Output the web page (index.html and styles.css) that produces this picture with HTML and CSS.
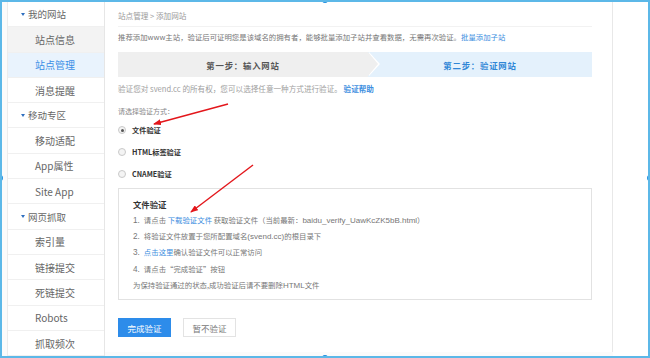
FILE: index.html
```html
<!DOCTYPE html>
<html lang="zh-CN">
<head>
    <meta charset="UTF-8">
    <title>添加网站</title>
    <link rel="stylesheet" href="styles.css">
</head>
<body>
    <div class="frame">
        <div class="sidebar">
            <div class="nav-head"><span class="caret"></span>我的网站</div>
            <div class="nav-item hover">站点信息</div>
            <div class="nav-item active">站点管理</div>
            <div class="nav-item">消息提醒</div>
            <div class="nav-head"><span class="caret"></span>移动专区</div>
            <div class="nav-item">移动适配</div>
            <div class="nav-item">App属性</div>
            <div class="nav-item">Site App</div>
            <div class="nav-head"><span class="caret"></span>网页抓取</div>
            <div class="nav-item">索引量</div>
            <div class="nav-item">链接提交</div>
            <div class="nav-item">死链提交</div>
            <div class="nav-item">Robots</div>
            <div class="nav-item">抓取频次</div>
        </div>

        <div class="main">
            <div class="crumb">站点管理 &gt; 添加网站</div>
            <p class="intro">推荐添加www主站，验证后可证明您是该域名的拥有者，能够批量添加子站并查看数据，无需再次验证。<a class="link">批量添加子站</a></p>

            <div class="steps">
                <div class="step step-done">第一步：输入网站</div>
                <div class="step step-now">第二步：验证网站</div>
            </div>

            <p class="hint">验证您对 svend.cc 的所有权，您可以选择任意一种方式进行验证。 <a class="link strong">验证帮助</a></p>

            <p class="label">请选择验证方式：</p>
            <div class="radio-row"><span class="radio checked"></span>文件验证</div>
            <div class="radio-row"><span class="radio"></span>HTML标签验证</div>
            <div class="radio-row"><span class="radio"></span>CNAME验证</div>

            <div class="method-box">
                <h3>文件验证</h3>
                <ol class="steps-list">
                    <li><span class="num">1.</span>请点击 <a class="link">下载验证文件</a> 获取验证文件（当前最新：<span class="latin">baidu_verify_UawKcZK5bB.html</span>）</li>
                    <li><span class="num">2.</span>将验证文件放置于您所配置域名<span class="latin">(svend.cc)</span>的根目录下</li>
                    <li><span class="num">3.</span><a class="link">点击这里</a>确认验证文件可以正常访问</li>
                    <li><span class="num">4.</span>请点击“完成验证”按钮</li>
                </ol>
                <p class="note">为保持验证通过的状态,成功验证后请不要删除<span class="latin">HTML</span>文件</p>
            </div>

            <div class="actions">
                <button class="btn btn-primary">完成验证</button>
                <button class="btn">暂不验证</button>
            </div>
        </div>

        <div class="rest"></div>

        <svg class="arrows" width="650" height="358" viewBox="0 0 650 358">
            <defs>
                <marker id="head" markerWidth="8" markerHeight="6" refX="7" refY="3" orient="auto" markerUnits="userSpaceOnUse">
                    <path d="M0 0 L8 3 L0 6 Z" fill="#e3161b"/>
                </marker>
            </defs>
            <line x1="228" y1="104" x2="154" y2="124" stroke="#e3161b" stroke-width="1.4" marker-end="url(#head)"/>
            <line x1="253" y1="165" x2="191" y2="212" stroke="#e3161b" stroke-width="1.4" marker-end="url(#head)"/>
        </svg>

        <span class="handle h-top"></span>
        <span class="handle h-bottom"></span>
        <span class="handle h-left"></span>
        <span class="handle h-right"></span>
    </div>
</body>
</html>
```

FILE: styles.css
```css
* {
    box-sizing: border-box;
}
body {
    margin: 0;
    background: #fff;
    font-family: "Noto Sans CJK SC", "Liberation Sans", sans-serif;
    color: #555;
}
.frame {
    position: relative;
    width: 650px;
    height: 358px;
    border: 2px solid #5cb8e8;
    display: flex;
    overflow: hidden;
    background: #fbfbfb;
}

/* sidebar */
.sidebar {
    width: 98px;
    margin-left: 5px;
    border-left: 1px solid #ececec;
    border-right: 1px solid #e6e6e6;
    background: #fff;
    flex-shrink: 0;
}
.nav-head, .nav-item {
    height: 25.3px;
    border-bottom: 1px solid #f0f0f0;
    display: flex;
    align-items: center;
    font-size: 9.5px;
    color: #666;
}
.nav-head {
    padding-left: 13px;
}
.caret {
    width: 0;
    height: 0;
    border-left: 2.5px solid transparent;
    border-right: 2.5px solid transparent;
    border-top: 3px solid #2f6fbf;
    margin-right: 3px;
}
.nav-item {
    padding-left: 27px;
    font-size: 10px;
}
.nav-item.hover {
    background: #f3f3f3;
}
.nav-item.active {
    background: #e9f3fd;
    color: #3a8ee6;
}

/* main panel */
.main {
    width: 508px;
    flex-shrink: 0;
    background: #fff;
    border-right: 1px solid #e8e8e8;
    padding: 0 20px 0 13px;
    height: 350px;
    font-size: 7.6px;
}
.rest {
    flex: 1;
    background: #fff;
}
.crumb {
    padding-top: 8px;
    padding-bottom: 4px;
    line-height: 12px;
    color: #9a9a9a;
    border-bottom: 1px solid #f2f2f2;
}
.intro {
    margin: 4px 0 0;
    line-height: 12px;
    color: #777;
    font-size: 7.4px;
}
.link {
    color: #3b8ee0;
}
.link.strong {
    font-weight: bold;
}
.steps {
    display: flex;
    height: 25px;
    margin-top: 9px;
}
.step {
    display: flex;
    align-items: center;
    justify-content: center;
    font-size: 8.4px;
    letter-spacing: 0.8px;
    font-weight: bold;
}
.step-done {
    width: 250px;
    background: #efefef;
    color: #555;
    position: relative;
}
.step-done::before,
.step-done::after {
    content: "";
    position: absolute;
    top: 0;
    width: 0;
    height: 0;
    border-top: 12.5px solid transparent;
    border-bottom: 12.5px solid transparent;
    z-index: 1;
}
.step-done::before {
    right: -12px;
    border-left: 11px solid #fff;
}
.step-done::after {
    right: -10px;
    border-left: 10px solid #efefef;
}
.step-now {
    flex: 1;
    background: #e4f1fc;
    color: #2f86d6;
}
.hint {
    margin: 6px 0 0;
    line-height: 12px;
    color: #a0a0a0;
}
.label {
    margin: 10px 0 0;
    line-height: 12px;
    color: #888;
    font-size: 7px;
}
.radio-row {
    height: 22px;
    display: flex;
    align-items: center;
    font-size: 7.2px;
    font-weight: bold;
    color: #333;
}
.label + .radio-row {
    margin-top: 2px;
}
.radio {
    width: 8px;
    height: 8px;
    border-radius: 50%;
    border: 1px solid #c9c9c9;
    background: #f4f4f4;
    margin: 0 6px 0 0;
    position: relative;
}
.radio.checked::after {
    content: "";
    position: absolute;
    left: 1.5px;
    top: 1.5px;
    width: 3px;
    height: 3px;
    border-radius: 50%;
    background: #555;
}
.method-box {
    margin-top: 3px;
    border: 1px solid #e2e2e2;
    padding: 8px 14px 12px;
    height: 112px;
}
.method-box h3 {
    margin: 0 0 1px;
    font-size: 8.4px;
    line-height: 14px;
    color: #333;
}
.steps-list {
    list-style: none;
    margin: 0;
    padding: 0;
}
.steps-list li, .note {
    line-height: 15.2px;
    color: #777;
    font-size: 7.4px;
}
.note {
    margin: 0;
}
.num {
    font-family: "Liberation Sans", sans-serif;
    font-size: 8.2px;
    margin-right: 4px;
}
.latin {
    font-family: "Liberation Sans", sans-serif;
    font-size: 8px;
}
.actions {
    display: flex;
    gap: 12px;
    margin-top: 18px;
}
.btn {
    width: 53px;
    height: 19px;
    border: 1px solid #e3e3e3;
    background: #fff;
    color: #777;
    font-family: "Noto Sans CJK SC", sans-serif;
    font-size: 8.5px;
    padding: 0;
}
.btn-primary {
    background: #2d8cea;
    border-color: #2d8cea;
    color: #fff;
}

/* overlays */
.arrows {
    position: absolute;
    left: -2px;
    top: -2px;
    pointer-events: none;
}
.handle {
    position: absolute;
    width: 6px;
    height: 6px;
    border-radius: 50%;
    background: #1e8fe0;
}
.h-top { top: -5px; left: 320px; }
.h-bottom { bottom: -5px; left: 320px; }
.h-left { left: -5px; top: 173px; }
.h-right { right: -5px; top: 173px; }
```
